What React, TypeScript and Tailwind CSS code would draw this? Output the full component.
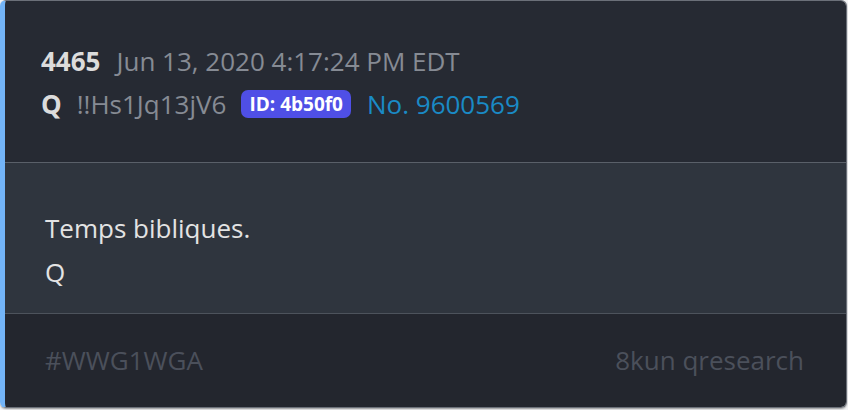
export default function App() {
  return (
    <div className="w-[848px] h-[410px] bg-[#f3f4f6]" style={{ fontFamily: '"Open Sans", "Noto Sans", sans-serif' }}>
      <div className="w-[847px] h-[408px] flex flex-col rounded-[6px] overflow-hidden border border-[#6b7079] border-l-[5px] border-l-[#73b4f7] shadow-[0_1px_2px_rgba(0,0,0,0.4)]">
        {/* header */}
        <div className="h-[162px] bg-[#262a33] border-b border-[#5a6069] pl-[36px] pt-[41px]">
          <div className="flex items-baseline gap-[16px] text-[26px] leading-[38px]">
            <span className="font-bold text-[#dcdcdc]">4465</span>
            <span className="text-[#868b94]">Jun 13, 2020 4:17:24 PM EDT</span>
          </div>
          <div className="flex items-center mt-[7px] text-[26px] leading-[34px]">
            <span className="font-bold text-[#dcdcdc]">Q</span>
            <span className="ml-[15px] text-[#868b94]">!!Hs1Jq13jV6</span>
            <span className="ml-[15px] rounded-[7px] bg-[#4f4fe6] px-[8px] h-[28px] flex items-center text-[19px] font-bold text-white">ID: 4b50f0</span>
            <span className="ml-[16px] text-[#1a8ac6]">No. 9600569</span>
          </div>
        </div>
        {/* body */}
        <div className="h-[151px] bg-[#2f353e] border-b border-[#4d535c] pl-[40px] pt-[43px] text-[26px] leading-[44px] text-[#e3e3e3]">
          <div>Temps bibliques.</div>
          <div>Q</div>
        </div>
        {/* footer */}
        <div className="flex-1 bg-[#23262e] pl-[40px] pr-[42px] flex items-center justify-between text-[26px] text-[#4b505b]">
          <span>#WWG1WGA</span>
          <span>8kun qresearch</span>
        </div>
      </div>
    </div>
  );
}
